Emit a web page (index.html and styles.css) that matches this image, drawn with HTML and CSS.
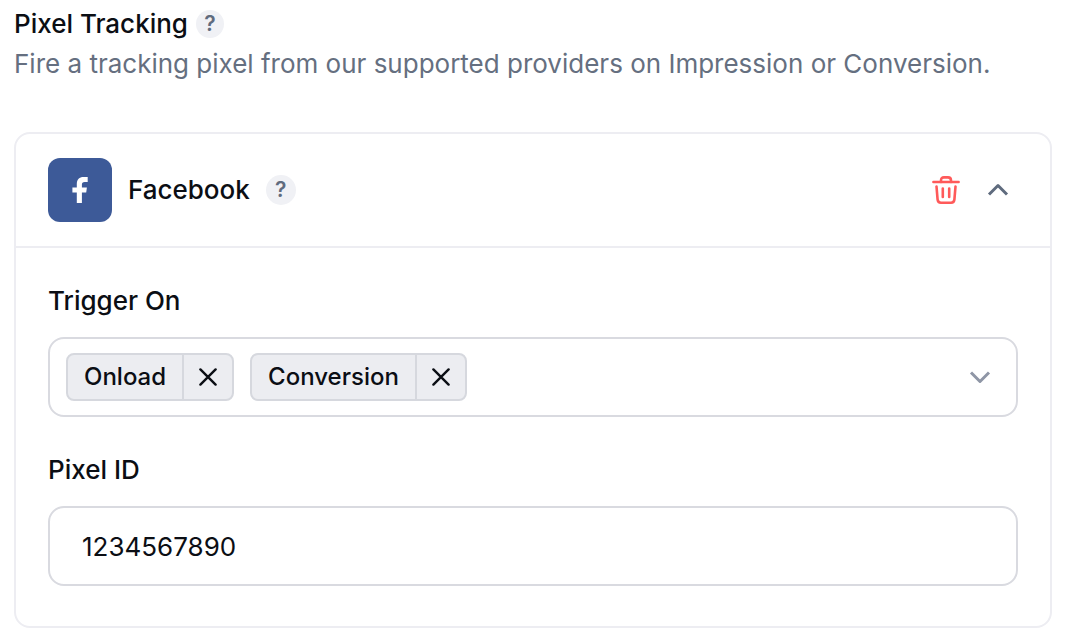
FILE: index.html
```html
<!DOCTYPE html>
<html lang="en">
<head>
    <meta charset="UTF-8">
    <meta name="viewport" content="width=device-width, initial-scale=1">
    <title>Pixel Tracking</title>
    <link rel="stylesheet" href="styles.css">
</head>
<body>

<section class="pixel-tracking">
    <div class="section-title">
        <h2>Pixel Tracking</h2>
        <button type="button" class="help" aria-label="About pixel tracking">?</button>
    </div>
    <p class="section-text">Fire a tracking pixel from our supported providers on Impression or Conversion.</p>

    <div class="card">
        <div class="card-header">
            <div class="provider-logo">
                <svg width="16" height="26" viewBox="0 0 16 26" fill="#fff">
                    <path d="M4.8 26V15.5H.4v-5h4.400V7C4.800 2.600 7.400 0 11.500 0h4.200v5h-3c-2 0-2.800 1-2.800 2.700v2.800h5l-.7 5H9.900V26z"/>
                </svg>
            </div>
            <h3>Facebook</h3>
            <button type="button" class="help help-large" aria-label="About Facebook pixel">?</button>

            <div class="card-actions">
                <button type="button" class="icon-button" aria-label="Delete">
                    <svg width="28" height="28" viewBox="0 0 28 28" fill="none" stroke="#ff5a5a" stroke-width="2.6" stroke-linecap="round" stroke-linejoin="round">
                        <path d="M1.4 6h25.200"/>
                        <path d="M9 6V4.500Q9 1.400 12 1.400h4q3 0 3 3.100V6"/>
                        <path d="M4.500 10.500l1.100 13.200q.3 3 3.300 3h10.200q3 0 3.300-3l1.100-13.200"/>
                        <path d="M10.800 12.500v8.500M17.200 12.500v8.500"/>
                    </svg>
                </button>
                <button type="button" class="icon-button" aria-label="Collapse">
                    <svg width="28" height="28" viewBox="0 0 28 28" fill="none" stroke="#5f6b7e" stroke-width="3" stroke-linejoin="round">
                        <path d="M5 18.500l9-9 9 9"/>
                    </svg>
                </button>
            </div>
        </div>

        <div class="card-body">
            <div class="field">
                <label for="trigger-on">Trigger On</label>
                <div class="control multi-select">
                    <div class="tag">
                        <span>Onload</span>
                        <button type="button" aria-label="Remove Onload">
                            <svg width="18" height="18" viewBox="0 0 18 18" stroke="#0b0e14" stroke-width="2.4" stroke-linecap="round">
                                <path d="M1.400 1.400l15.200 15.200M16.600 1.400L1.400 16.600"/>
                            </svg>
                        </button>
                    </div>
                    <div class="tag">
                        <span>Conversion</span>
                        <button type="button" aria-label="Remove Conversion">
                            <svg width="18" height="18" viewBox="0 0 18 18" stroke="#0b0e14" stroke-width="2.4" stroke-linecap="round">
                                <path d="M1.400 1.400l15.200 15.200M16.600 1.400L1.400 16.600"/>
                            </svg>
                        </button>
                    </div>
                    <select id="trigger-on">
                        <option value=""></option>
                    </select>
                    <svg class="chevron" width="28" height="28" viewBox="0 0 28 28" fill="none" stroke="#8f96a6" stroke-width="3" stroke-linejoin="round">
                        <path d="M5 9.500l9 9 9-9"/>
                    </svg>
                </div>
            </div>

            <div class="field">
                <label for="pixel-id">Pixel ID</label>
                <input type="text" id="pixel-id" class="control" value="1234567890">
            </div>
        </div>
    </div>
</section>

</body>
</html>
```

FILE: styles.css
```css
* {
    box-sizing: border-box;
}

body {
    margin: 0;
    font-family: Inter, "Liberation Sans", sans-serif;
    font-size: 26px;
    color: #0b0e14;
    background: #fff;
}

h2, h3, p {
    margin: 0;
    font-size: 26px;
    line-height: 40px;
}

h2, h3 {
    font-weight: 500;
}

button {
    padding: 0;
    border: none;
    background: none;
    font-family: inherit;
    color: inherit;
    cursor: pointer;
}

svg {
    display: block;
}

.pixel-tracking {
    padding: 4px 14px 10px;
}

.section-title {
    display: flex;
    align-items: center;
    gap: 8px;
}

.section-text {
    color: #656f80;
}

.help {
    width: 28px;
    height: 28px;
    border-radius: 50%;
    background: #f0f1f5;
    color: #5f6b7e;
    font-size: 21px;
    font-weight: 600;
    line-height: 28px;
}

.help-large {
    width: 30px;
    height: 30px;
}

.card {
    margin-top: 48px;
    border: 2px solid #ededf2;
    border-radius: 16px;
}

.card-header {
    display: flex;
    align-items: center;
    gap: 16px;
    padding: 24px 38px 24px 32px;
    border-bottom: 2px solid #ededf2;
}

.provider-logo {
    display: flex;
    align-items: center;
    justify-content: center;
    width: 64px;
    height: 64px;
    border-radius: 12px;
    background: #3d5a98;
}

.card-actions {
    display: flex;
    gap: 24px;
    margin-left: auto;
}

.card-body {
    display: flex;
    flex-direction: column;
    gap: 32px;
    padding: 32px 32px 40px;
}

.field {
    display: flex;
    flex-direction: column;
    gap: 16px;
}

.field label {
    font-weight: 500;
    line-height: 41px;
}

.control {
    width: 100%;
    height: 80px;
    border: 2px solid #d9dae0;
    border-radius: 16px;
    background: #fff;
}

input.control {
    padding: 0 32px;
    font-family: inherit;
    font-size: 26px;
    color: inherit;
}

.multi-select {
    display: flex;
    align-items: center;
    gap: 16px;
    padding: 0 22px 0 16px;
}

.multi-select select {
    flex: 1;
    min-width: 0;
    height: 48px;
    border: none;
    background: none;
    appearance: none;
    font-family: inherit;
    font-size: 24px;
}

.chevron {
    pointer-events: none;
}

.tag {
    display: flex;
    height: 48px;
    border: 2px solid #d6d8de;
    border-radius: 8px;
    background: #ecedf1;
    font-size: 24px;
    font-weight: 500;
    line-height: 44px;
}

.tag span {
    padding: 0 16px;
}

.tag button {
    display: flex;
    align-items: center;
    justify-content: center;
    width: 50px;
    border-left: 2px solid #d6d8de;
}
```
